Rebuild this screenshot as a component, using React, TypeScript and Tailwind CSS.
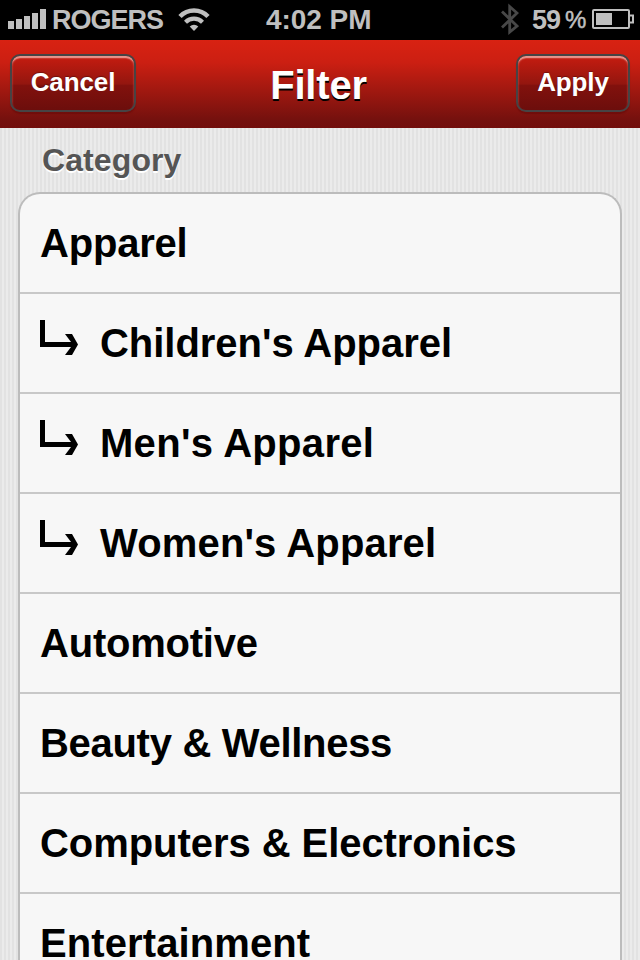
const rows = [
  { label: "Apparel", child: false, tracking: "tracking-[-0.2px]" },
  { label: "Children's Apparel", child: true, tracking: "tracking-[-0.03px]" },
  { label: "Men's Apparel", child: true, tracking: "tracking-[0.3px]" },
  { label: "Women's Apparel", child: true, tracking: "tracking-[0.15px]" },
  { label: "Automotive", child: false, tracking: "tracking-[-0.22px]" },
  { label: "Beauty & Wellness", child: false, tracking: "tracking-[-0.3px]" },
  { label: "Computers & Electronics", child: false, tracking: "tracking-[-0.06px]" },
  { label: "Entertainment", child: false, tracking: "tracking-[0.1px]" },
];

function StatusBar() {
  return (
    <div className="flex h-10 shrink-0 items-center bg-black text-[27px] font-bold leading-10 text-[#bfbfbf]">
      <svg className="ml-2 shrink-0" width="38" height="40" viewBox="0 0 38 40" fill="#bfbfbf">
        <path d="M0 21h6v8H0zM8 19h6v10H8zM16 16h6v13h-6zM24 13h6v16h-6zM32 9h6v20h-6z" />
      </svg>
      <span className="ml-[6px] w-[110px] whitespace-nowrap tracking-[-1px]">ROGERS</span>
      <svg className="ml-4 shrink-0" width="32" height="40" viewBox="0 0 32 40" fill="none" stroke="#bfbfbf">
        <path d="M2 16.5a19.5 19.5 0 0 1 28 0" strokeWidth="4.6" />
        <path d="M7.500 22.200a12 12 0 0 1 17 0" strokeWidth="4.200" />
        <path d="M16 31l-4.300-4.600a6.200 6.200 0 0 1 8.600 0z" fill="#bfbfbf" stroke="none" />
      </svg>
      <span className="ml-[56px] w-[110px] whitespace-nowrap text-[28px] tracking-[-0.05px]">4:02 PM</span>
      <svg className="ml-[125px] shrink-0" width="18" height="40" viewBox="0 0 18 40" fill="none" stroke="#484848" strokeWidth="2.8">
        <path d="M1 11.500L16 26 8.700 32V6.500L16 13 1 27.500" />
      </svg>
      <span className="ml-[13px] w-[33px] whitespace-nowrap tracking-[-1px]">59</span>
      <span className="w-[24px] text-[24px] font-normal [-webkit-text-stroke:0.5px_#bfbfbf]">%</span>
      <svg className="ml-[3px] shrink-0" width="42" height="40" viewBox="0 0 42 40" fill="none" stroke="#bfbfbf" strokeWidth="2">
        <rect x="1" y="10" width="36" height="18" rx="1" />
        <path d="M38 15.500h3v7h-3" />
        <path d="M4 13h16v12H4z" fill="#bfbfbf" stroke="none" />
      </svg>
    </div>
  );
}

function NavButton({ label, size }: { label: string; size: string }) {
  return (
    <button
      className={`${size} h-[58px] rounded-[10px] border-2 border-[#474344] bg-[linear-gradient(#c61c10_0%,#93160f_52%,#82110d_54%,#6c0e0c_100%)] pb-[2px] text-[26px] font-bold leading-[50px] tracking-[-0.1px] text-white shadow-[inset_0_3px_1px_-1px_#e9948c,inset_0_2px_2px_#d9655c,0_2px_1px_rgba(70,0,0,0.25)] [text-shadow:0_-1px_1px_rgba(0,0,0,0.3)]`}
    >
      {label}
    </button>
  );
}

function ChildArrow() {
  return (
    <svg className="mb-[10px] mr-[22px] shrink-0" width="38" height="36" viewBox="0 0 38 36">
      <path d="M0 0h5v22h26l-6-8h7l6 10.500L32 35h-7l6-8H0z" />
    </svg>
  );
}

export default function App() {
  return (
    <div className="flex h-[960px] w-[640px] flex-col overflow-hidden bg-[repeating-linear-gradient(90deg,#e2e2e2_0px,#e2e2e2_2px,#ebebeb_2px,#ebebeb_4px)] font-['Liberation_Sans',Arial,sans-serif]">
      <StatusBar />
      <header className="flex h-[88px] shrink-0 items-start justify-between bg-[linear-gradient(#d82212_0%,#cc1f12_25%,#75110e_90%,#720e0c_100%)] pl-[10px] pr-[10px] pt-[14px]">
        <NavButton label="Cancel" size="w-[126px]" />
        <h1 className="-ml-[15px] whitespace-nowrap text-[40px] font-bold leading-[62px] tracking-[-0.2px] text-white [text-shadow:0_2px_0_#000]">Filter</h1>
        <NavButton label="Apply" size="w-[114px]" />
      </header>
      <h2 className="h-16 shrink-0 pl-[42px] text-[32px] font-bold leading-[64px] tracking-[0.1px] text-[#555] [text-shadow:0_2px_0_#fff]">Category</h2>
      <ul className="mx-[18px] h-[768px] shrink-0 rounded-t-[22px] border-2 border-b-0 border-[#bcbcbc] bg-[#f7f7f7]">
        {rows.map((row) => (
          <li key={row.label} className="flex h-[100px] items-center border-b-2 border-[#c8c8c8] px-5 text-[40px] font-bold text-black last:h-[66px] last:items-start last:border-b-0 last:pt-[26px] last:leading-[46px]">
            {row.child && <ChildArrow />}
            <span className={`whitespace-nowrap ${row.tracking}`}>{row.label}</span>
          </li>
        ))}
      </ul>
    </div>
  );
}
